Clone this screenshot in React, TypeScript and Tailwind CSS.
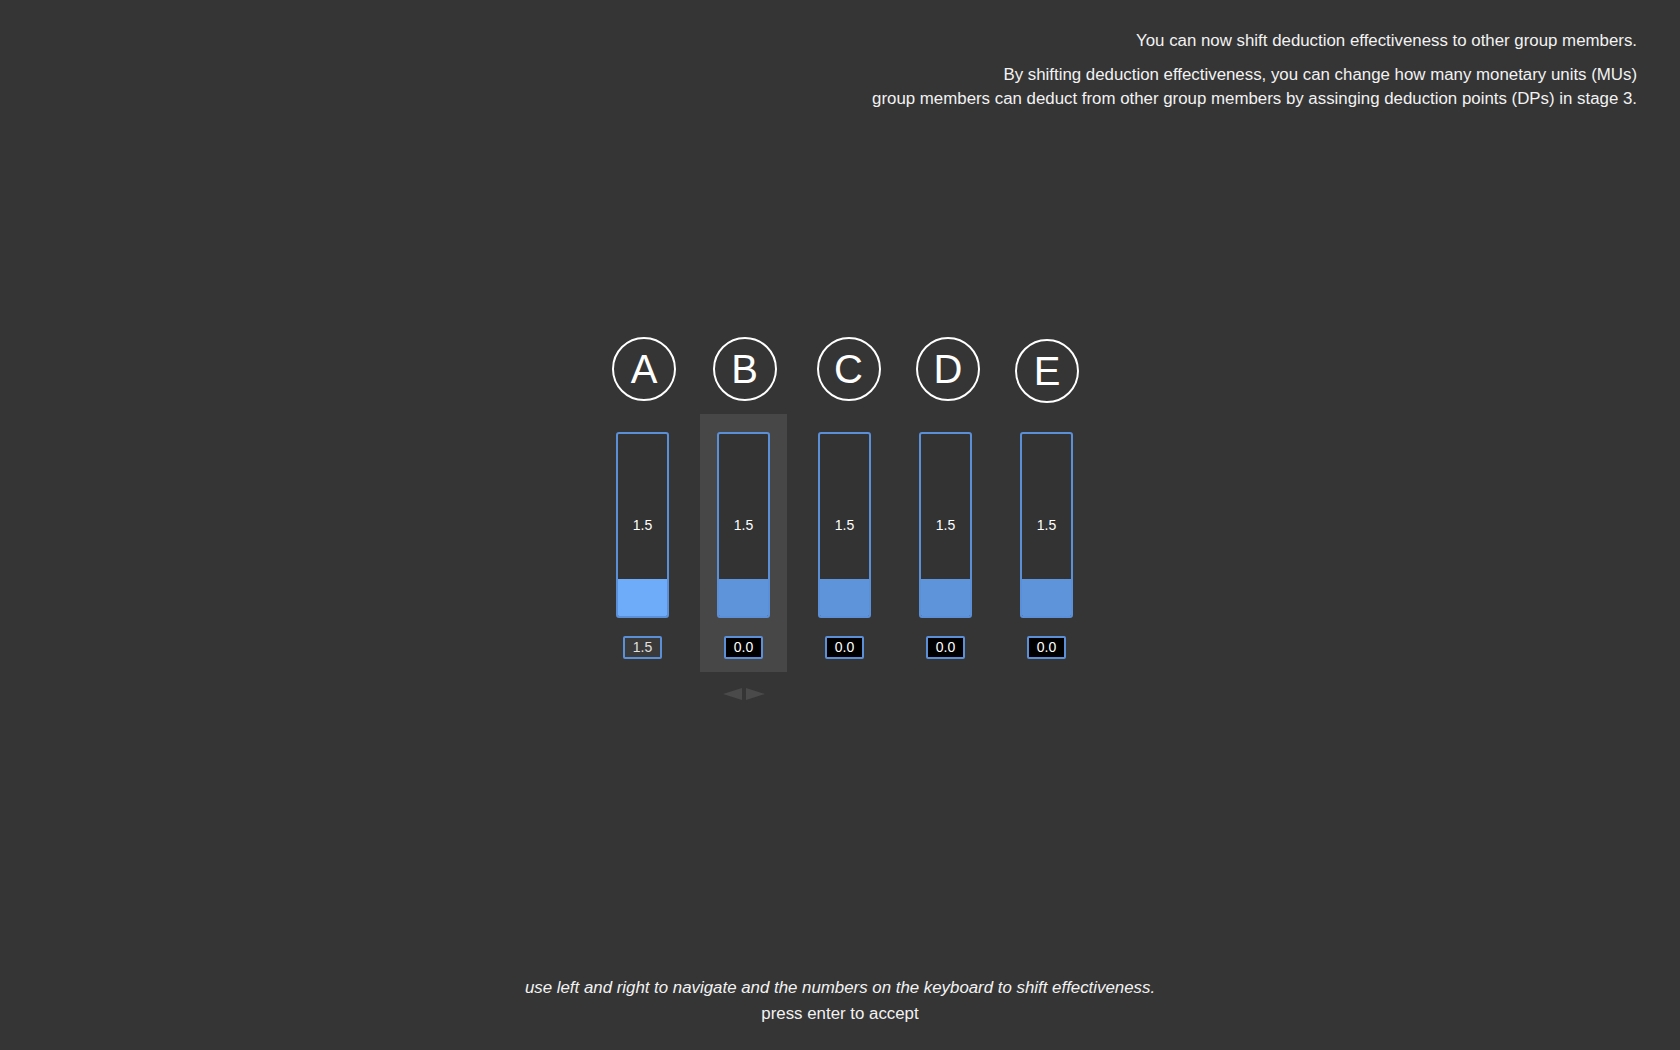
import React from 'react';

const members = [
  { letter: 'A', value: '1.5', box: '1.5', active: true, shift: 'ml-[3px]' },
  { letter: 'B', value: '1.5', box: '0.0', active: false, shift: 'ml-[2px]' },
  { letter: 'C', value: '1.5', box: '0.0', active: false, shift: 'ml-[8px]' },
  { letter: 'D', value: '1.5', box: '0.0', active: false, shift: 'ml-[5px]' },
  { letter: 'E', value: '1.5', box: '0.0', active: false, shift: 'ml-[1px] mt-[2px] mb-[-2px]' },
];

const selected = 1;

const App: React.FC = () => {
  return (
    <div
      className="h-screen w-full bg-[#353535] text-[#f2f2f2] flex flex-col overflow-hidden"
      style={{ fontFamily: '"Liberation Sans", Arial, sans-serif' }}
    >
      {/* Instructions */}
      <div className="pt-[29px] pr-[43px] text-right text-[16.85px] leading-[24px]">
        <p>You can now shift deduction effectiveness to other group members.</p>
        <p className="mt-[10px]">
          By shifting deduction effectiveness, you can change how many monetary units (MUs)
          <br />
          group members can deduct from other group members by assinging deduction points (DPs) in stage 3.
        </p>
      </div>

      {/* Members */}
      <div className="mt-[226px] flex justify-center">
        <div className="flex ml-[9px]">
          {members.map(({ letter, value, box, active, shift }, i) => (
            <div key={letter} className="w-[101px] flex flex-col items-center">
              <div
                className={`w-[64px] h-[64px] rounded-full border-[2.5px] border-white flex items-center justify-center text-[40px] leading-none text-white ${shift}`}
              >
                {letter}
              </div>

              <div
                className={`mt-[13px] w-[87px] pt-[18px] pb-[13px] flex flex-col items-center ${
                  i === selected ? 'bg-[#474747]' : ''
                }`}
              >
                <div className="w-[53px] h-[186px] rounded-[3px] border-2 border-[#5b8fd8] bg-[#333333] flex flex-col overflow-hidden">
                  <div className="flex-1 flex items-center justify-center text-[14px] text-white pt-[37px]">
                    {value}
                  </div>
                  <div className={`h-[37px] ${active ? 'bg-[#6eabf8]' : 'bg-[#5e95da]'}`} />
                </div>

                <div
                  className={`mt-[18px] w-[39px] h-[23px] border-2 border-[#5b8fd8] rounded-[2px] flex items-center justify-center text-[14px] ${
                    active ? 'bg-[#3a3a3a] text-[#e0e0e0]' : 'bg-black text-white'
                  }`}
                >
                  {box}
                </div>
              </div>

              {i === selected && (
                <div className="mt-[16px] flex gap-[4px]">
                  <svg width="19" height="12" viewBox="0 0 19 12">
                    <polygon points="0,6 19,0 19,12" fill="#4a4a4a" />
                  </svg>
                  <svg width="19" height="12" viewBox="0 0 19 12">
                    <polygon points="19,6 0,0 0,12" fill="#4a4a4a" />
                  </svg>
                </div>
              )}
            </div>
          ))}
        </div>
      </div>

      {/* Footer */}
      <div className="mt-auto pb-[23px] text-center text-[16.85px] leading-[26px]">
        <p className="italic">
          use left and right to navigate and the numbers on the keyboard to shift effectiveness.
        </p>
        <p>press enter to accept</p>
      </div>
    </div>
  );
};

export default App;
